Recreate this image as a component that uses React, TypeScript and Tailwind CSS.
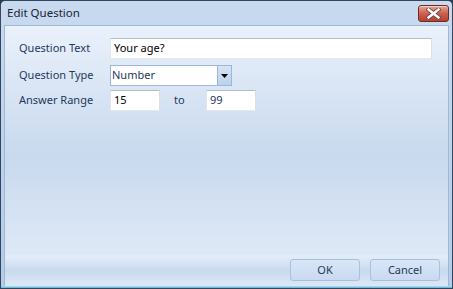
import React from 'react';

const font = { fontFamily: '"Noto Sans", "Open Sans", sans-serif' };

const CloseButton: React.FC = () => (
  <button className="w-[31px] h-[17px] mt-[1px] rounded-[3px] border border-[#6e2b22] bg-gradient-to-b from-[#e8a596] via-[#cf5f4d] to-[#b8402f] flex items-center justify-center shadow-[inset_0_1px_0_rgba(255,255,255,0.5)]">
    <svg width="15" height="11" viewBox="0 0 15 11">
      <path d="M2.5 1.5 L12.5 9.5 M12.5 1.5 L2.5 9.5" stroke="#6b4a46" strokeWidth="4.2" strokeLinecap="square" />
      <path d="M2.5 1.5 L12.5 9.5 M12.5 1.5 L2.5 9.5" stroke="#ffffff" strokeWidth="2.4" strokeLinecap="square" />
    </svg>
  </button>
);

const TextBox: React.FC<{ value: string; width: string; dark?: boolean }> = ({ value, width, dark }) => (
  <div className={`${width} h-[21px] bg-white border border-[#abadb3] border-t-[#b9bcc2] border-b-[#e3e9ef] border-l-[#e2e3ea] border-r-[#dbdfe6] flex items-center pl-[3px] text-[11px] ${dark ? 'text-[#1e395b]' : 'text-black'}`}>
    {value}
  </div>
);

export default function App() {
  return (
    <div className="w-[453px] h-[289px] overflow-hidden bg-[#2c3a4c]" style={font}>
      <div className="w-full h-full flex flex-col border border-[#34465e] rounded-t-[5px] bg-gradient-to-b from-[#c8daf0] to-[#b4cce8]">
        {/* Title bar */}
        <div className="h-[24px] flex items-start justify-between pl-[6px] pr-[3px] pt-[3px] shrink-0">
          <span className="text-[11.5px] text-[#1b2330] leading-[16px] mt-[1px]">Edit Question</span>
          <CloseButton />
        </div>

        {/* Client area */}
        <div className="flex-1 flex flex-col mx-[3px] mb-[1px] border border-[#9fb8d6] border-b-0 bg-gradient-to-b from-[#eaf1fb] via-[#c8d9ee] to-[#e5eefa]">
          <div className="flex-1 flex flex-col pt-[12px] pl-[14px] pr-[16px] text-[11px] text-[#1e395b]">
            <div className="flex items-center">
              <span className="w-[91px]">Question Text</span>
              <TextBox value="Your age?" width="flex-1" />
            </div>
            <div className="flex items-center mt-[6px]">
              <span className="w-[91px]">Question Type</span>
              <div className="w-[122px] h-[21px] flex bg-white border border-[#9cb7db]">
                <span className="flex-1 flex items-center pl-[1px] text-[#1e395b]">Number</span>
                <span className="w-[14px] border-l border-[#9cb7db] bg-gradient-to-b from-[#d6e4f4] to-[#bcd1ec] flex items-center justify-center">
                  <svg width="7" height="4" viewBox="0 0 7 4"><path d="M0 0 H7 L3.5 4 Z" fill="#000" /></svg>
                </span>
              </div>
            </div>
            <div className="flex items-center mt-[4px]">
              <span className="w-[91px]">Answer Range</span>
              <TextBox value="15" width="w-[50px]" />
              <span className="w-[46px] pl-[14px]">to</span>
              <TextBox value="99" width="w-[50px]" dark />
            </div>
          </div>

          {/* Footer */}
          <div className="h-[31px] flex items-start pt-[4px] justify-end gap-[10px] pr-[8px] bg-gradient-to-b from-[#e4eefa] via-[#c9daee] to-[#dce8f6] shrink-0">
            <button className="w-[70px] h-[22px] rounded-[3px] border border-[#a9c1de] bg-gradient-to-b from-[#d8e6f6] to-[#c9dbf1] text-[11px] text-[#1e395b]">OK</button>
            <button className="w-[70px] h-[22px] rounded-[3px] border border-[#a9c1de] bg-gradient-to-b from-[#d8e6f6] to-[#c9dbf1] text-[11px] text-[#1e395b]">Cancel</button>
          </div>
        </div>
        <div className="h-[1px] bg-[#5fc3e6] shrink-0" />
      </div>
    </div>
  );
}
